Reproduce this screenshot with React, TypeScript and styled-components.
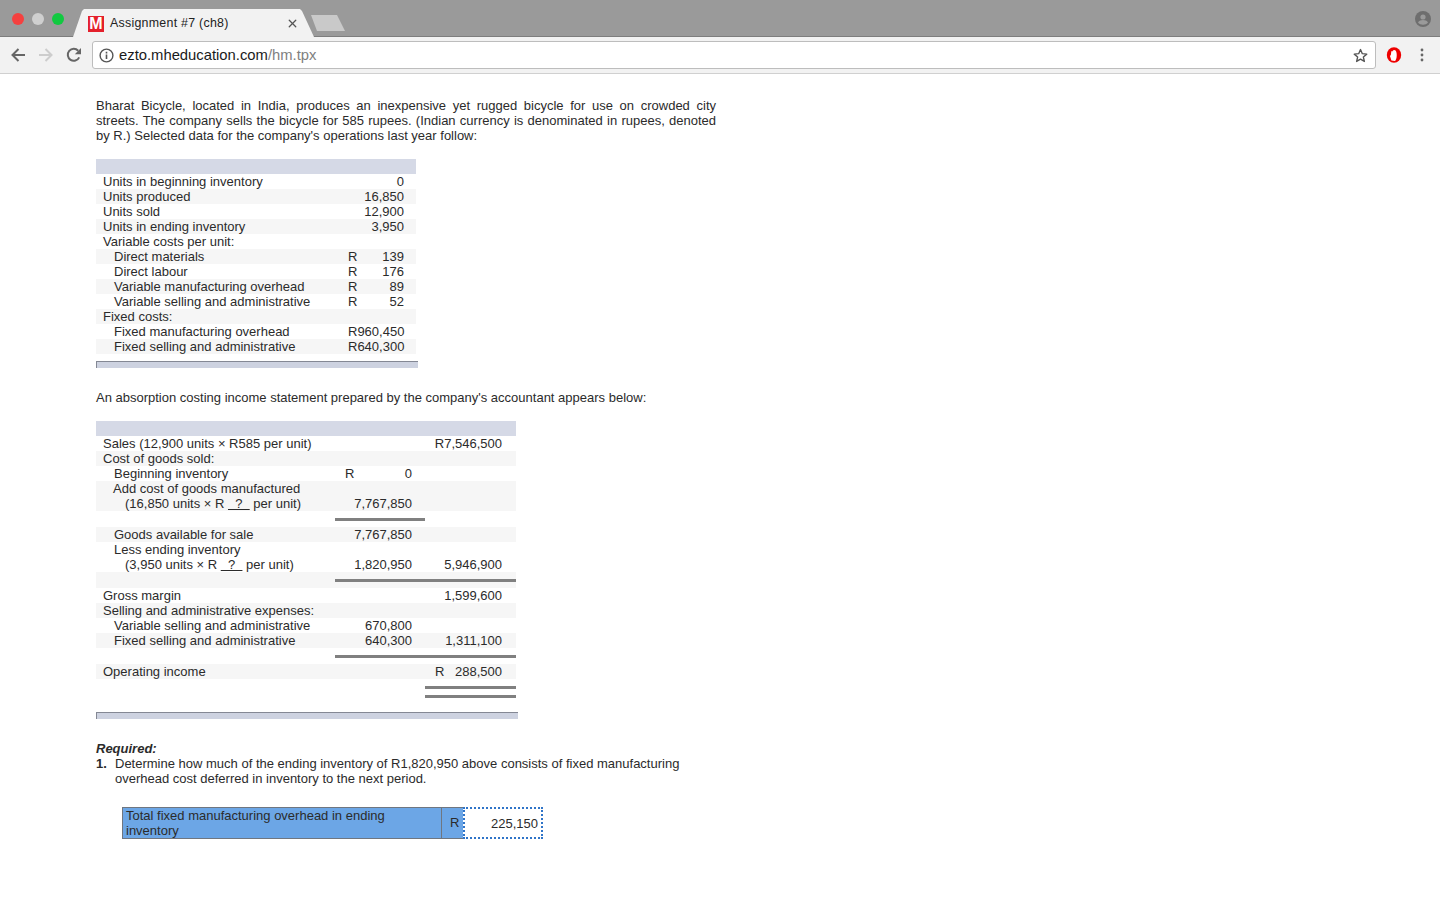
import React from "react";
import styled, { createGlobalStyle } from "styled-components";
import { X } from "lucide-react";

const Global = createGlobalStyle`
  html, body { margin: 0; padding: 0; background: #fff; }
  body { font-family: "Liberation Sans", Arial, sans-serif; color: #222; overflow: hidden; }
`;

const Page = styled.div`
  width: 1440px;
  height: 900px;
  display: flex;
  flex-direction: column;
`;

const TabBar = styled.div`
  height: 37px;
  box-sizing: border-box;
  background: #9a9a9a;
  border-bottom: 1px solid #7d7d7d;
  display: flex;
  align-items: flex-end;
  padding: 0 9px 0 12px;
`;

const Lights = styled.div`
  display: flex;
  gap: 8px;
  align-self: flex-start;
  margin-top: 13px;
  width: 61px;
`;

const Light = styled.span<{ $c: string }>`
  width: 12px;
  height: 12px;
  border-radius: 50%;
  background: ${(p) => p.$c};
`;

const Tab = styled.div`
  width: 241px;
  height: 28px;
  margin-bottom: -1px;
  background: #f2f2f2;
  clip-path: polygon(0 100%, 9px 2px, 11px 0, 227px 0, 229px 2px, 100% 100%);
  display: flex;
  align-items: center;
  padding: 0 15px;
  box-sizing: border-box;
`;

const TabLogo = styled.span`
  width: 16px;
  height: 16px;
  background: #e4202c;
  color: #fff;
  font-weight: 700;
  font-size: 16px;
  line-height: 16px;
  text-align: center;
  margin-right: 6px;
  margin-top: 1px;
  flex: none;
`;

const TabTitle = styled.span`
  flex: 1;
  font-size: 12.4px;
  letter-spacing: 0.26px;
  color: #222;
  white-space: nowrap;
`;

const NewTab = styled.div`
  width: 34px;
  height: 16px;
  background: #c9c9c9;
  margin: 0 0 5px -3px;
  clip-path: polygon(0 0, 26px 0, 100% 100%, 6px 100%);
`;

const Spacer = styled.div`
  flex: 1;
`;

const Profile = styled.svg`
  width: 16px;
  height: 16px;
  align-self: flex-start;
  margin-top: 11px;
`;

const Toolbar = styled.div`
  height: 37px;
  box-sizing: border-box;
  background: #f2f2f2;
  border-bottom: 1px solid #d0d0d0;
  display: flex;
  align-items: center;
  padding: 0 16px 0 10px;
`;

const NavIcons = styled.div`
  display: flex;
  gap: 12px;
  width: 82px;
  align-items: center;
`;

const NavIcon = styled.svg`
  width: 16px;
  height: 16px;
  flex: none;
`;

const Omnibox = styled.div`
  width: 1284px;
  height: 28px;
  box-sizing: border-box;
  background: #fff;
  border: 1px solid #bdbdbd;
  border-radius: 3px;
  display: flex;
  align-items: center;
  padding: 0 7px 0 6px;
  color: #555;
`;

const Url = styled.span`
  margin-left: 5px;
  flex: 1;
  font-size: 14.8px;
  color: #1a1a1a;
`;

const UrlPath = styled.span`
  color: #808080;
`;

const Extras = styled.div`
  flex: 1;
  display: flex;
  align-items: center;
  justify-content: space-between;
  padding: 0 0 0 10px;
`;

const Dots = styled.svg`
  width: 4px;
  height: 14px;
`;

const Content = styled.main`
  padding: 24px 0 0 96px;
  font-size: 13px;
  line-height: 15px;
  color: #2b2b2b;
`;

const Para = styled.p`
  width: 620px;
  margin: 0 0 16px;
  text-align: justify;
`;

const Plain = styled.p`
  margin: 22px 0 16px;
`;

const Sheet = styled.div<{ $w: number }>`
  width: ${(p) => p.$w}px;
`;

const SheetHead = styled.div`
  height: 15px;
  background: #d5d9e6;
`;

const SheetFoot = styled.div<{ $w: number; $top: number }>`
  width: ${(p) => p.$w}px;
  height: 7px;
  box-sizing: border-box;
  margin-top: ${(p) => p.$top}px;
  background: #cdd2e0;
  border-top: 1px solid #848894;
  border-left: 1px solid #848894;
`;

const Row1 = styled.div<{ $shade?: boolean }>`
  display: grid;
  grid-template-columns: 252px 1fr;
  height: 15px;
  background: ${(p) => (p.$shade ? "#f6f6f6" : "#fff")};
  white-space: nowrap;
`;

const Label = styled.span<{ $indent?: number }>`
  padding-left: ${(p) => 7 + (p.$indent ?? 0)}px;
`;

const Amount = styled.span<{ $pad?: number }>`
  text-align: right;
  padding-right: ${(p) => p.$pad ?? 12}px;
`;

const Row2 = styled.div<{ $shade?: boolean; $tall?: boolean }>`
  display: grid;
  grid-template-columns: 239px 90px 91px;
  height: ${(p) => (p.$tall ? 16 : 15)}px;
  background: ${(p) => (p.$shade ? "#f6f6f6" : "#fff")};
  white-space: nowrap;
`;

const Cell = styled.div<{ $l?: number; $r?: number }>`
  display: flex;
  justify-content: space-between;
  padding: 0 ${(p) => p.$r ?? 13}px 0 ${(p) => p.$l ?? 10}px;
`;

const Rule = styled.div<{ $start: number; $end: number; $top?: number }>`
  grid-column: ${(p) => p.$start} / ${(p) => p.$end};
  height: 3px;
  margin-top: ${(p) => p.$top ?? 7}px;
  background: #808080;
`;

const Blank = styled.span``;

const Under = styled.span`
  text-decoration: underline;
`;

const Required = styled.div`
  margin-top: 22px;
  font-weight: 700;
  font-style: italic;
`;

const Item = styled.div`
  display: flex;
  width: 600px;
`;

const ItemNo = styled.b`
  width: 19px;
  flex: none;
`;

const Answer = styled.div`
  margin: 21px 0 0 26px;
  width: 421px;
  height: 32px;
  display: grid;
  grid-template-columns: 320px 21px 80px;
`;

const AnswerLabel = styled.div`
  background: #6ca6e6;
  border: 1px solid #6f7680;
  padding: 0 3px;
  box-sizing: border-box;
`;

const AnswerCur = styled.div`
  background: #6ca6e6;
  border: solid #6f7680;
  border-width: 1px 0;
  padding: 7px 0 0 8px;
  box-sizing: border-box;
`;

const AnswerInput = styled.div`
  border: 2px dotted #2f74c8;
  box-sizing: border-box;
  text-align: right;
  padding: 7px 3px 0 0;
  background: #fff;
`;

const t1: [string, number, string, string, boolean][] = [
  ["Units in beginning inventory", 0, "", "0", false],
  ["Units produced", 0, "", "16,850", true],
  ["Units sold", 0, "", "12,900", false],
  ["Units in ending inventory", 0, "", "3,950", true],
  ["Variable costs per unit:", 0, "", "", false],
  ["Direct materials", 11, "R", "139", true],
  ["Direct labour", 11, "R", "176", false],
  ["Variable manufacturing overhead", 11, "R", "89", true],
  ["Variable selling and administrative", 11, "R", "52", false],
  ["Fixed costs:", 0, "", "", true],
  ["Fixed manufacturing overhead", 11, "", "R960,450", false],
  ["Fixed selling and administrative", 11, "", "R640,300", true],
];

export default function App() {
  return (
    <Page>
      <Global />
      <TabBar>
        <Lights>
          <Light $c="#f5403f" />
          <Light $c="#cfcfcf" />
          <Light $c="#11c940" />
        </Lights>
        <Tab>
          <TabLogo>M</TabLogo>
          <TabTitle>Assignment #7 (ch8)</TabTitle>
          <X size={13} strokeWidth={2.4} color="#555" />
        </Tab>
        <NewTab />
        <Spacer />
        <Profile viewBox="0 0 16 16">
          <circle cx="8" cy="8" r="8" fill="#6e6e6e" />
          <circle cx="8" cy="6" r="2.6" fill="#9a9a9a" />
          <path d="M3 11.5c1-2 3-2.6 5-2.6s4 .6 5 2.6c-1.2 1.5-3 2.2-5 2.2s-3.8-.7-5-2.2z" fill="#9a9a9a" />
        </Profile>
      </TabBar>
      <Toolbar>
        <NavIcons>
          <NavIcon viewBox="0 0 16 16">
            <path d="M15 8H2.5M8.5 2 2.5 8l6 6" fill="none" stroke="#666" strokeWidth="2" />
          </NavIcon>
          <NavIcon viewBox="0 0 16 16">
            <path d="M1 8h12.5M7.5 2l6 6-6 6" fill="none" stroke="#cdcdcd" strokeWidth="2" />
          </NavIcon>
          <NavIcon viewBox="0 0 16 16">
            <path d="M13.2 10.4A6 6 0 1 1 12.2 3.7" fill="none" stroke="#666" strokeWidth="2" />
            <path d="M15 1v6.2H8.8z" fill="#666" />
          </NavIcon>
        </NavIcons>
        <Omnibox>
          <svg width="15" height="15" viewBox="0 0 15 15">
            <circle cx="7.5" cy="7.5" r="6.4" fill="none" stroke="#555" strokeWidth="1.4" />
            <path d="M6.7 6.5h1.6v4.6H6.7zM6.7 3.8h1.6v1.6H6.7z" fill="#555" />
          </svg>
          <Url>
            ezto.mheducation.com<UrlPath>/hm.tpx</UrlPath>
          </Url>
          <svg width="15" height="15" viewBox="0 0 24 24">
            <path
              d="M12 2.5l2.9 6.6 7.1.7-5.4 4.7 1.6 7-6.2-3.7-6.2 3.7 1.6-7L2 9.8l7.1-.7z"
              fill="none"
              stroke="#555"
              strokeWidth="2.2"
              strokeLinejoin="round"
            />
          </svg>
        </Omnibox>
        <Extras>
          <svg width="16" height="16" viewBox="0 0 16 16">
            <ellipse cx="8" cy="8" rx="7.2" ry="7.8" fill="#ee0000" />
            <path
              d="M5.4 13.6 3.9 8.7l.9-.5.5-3.6c.2-.8 1-.7 1.2-.1.4-1.6 2.2-2 3.1-.9 1.1 1.4 1.4 4.3 1 6.6-.3 1.6-.9 3.2-1.6 3.9z"
              fill="#fff"
            />
          </svg>
          <Dots viewBox="0 0 4 14">
            <circle cx="2" cy="2" r="1.4" fill="#666" />
            <circle cx="2" cy="7" r="1.4" fill="#666" />
            <circle cx="2" cy="12" r="1.4" fill="#666" />
          </Dots>
        </Extras>
      </Toolbar>
      <Content>
        <Para>
          Bharat Bicycle, located in India, produces an inexpensive yet rugged bicycle for use on crowded city streets.
          The company sells the bicycle for 585 rupees. (Indian currency is denominated in rupees, denoted by R.) Selected
          data for the company's operations last year follow:
        </Para>
        <Sheet $w={320}>
          <SheetHead />
          {t1.map(([l, ind, c, a, s]) => (
            <Row1 key={l} $shade={s}>
              <Label $indent={ind}>{l}</Label>
              <Cell $l={0} $r={12}>
                <span>{c}</span>
                <span>{a}</span>
              </Cell>
            </Row1>
          ))}
        </Sheet>
        <SheetFoot $w={322} $top={7} />
        <Plain>An absorption costing income statement prepared by the company's accountant appears below:</Plain>
        <Sheet $w={420}>
          <SheetHead />
          <Row2>
            <Label>Sales (12,900 units × R585 per unit)</Label>
            <Blank />
            <Amount $pad={14}>R7,546,500</Amount>
          </Row2>
          <Row2 $shade>
            <Label>Cost of goods sold:</Label>
          </Row2>
          <Row2>
            <Label $indent={11}>Beginning inventory</Label>
            <Cell>
              <span>R</span>
              <span>0</span>
            </Cell>
          </Row2>
          <Row2 $shade>
            <Label $indent={10}>Add cost of goods manufactured</Label>
          </Row2>
          <Row2 $shade>
            <Label $indent={22}>
              (16,850 units × R <Under>&nbsp;&nbsp;?&nbsp;&nbsp;</Under> per unit)
            </Label>
            <Amount $pad={13}>7,767,850</Amount>
          </Row2>
          <Row2 $tall>
            <Rule $start={2} $end={3} />
          </Row2>
          <Row2 $shade>
            <Label $indent={11}>Goods available for sale</Label>
            <Amount $pad={13}>7,767,850</Amount>
          </Row2>
          <Row2>
            <Label $indent={11}>Less ending inventory</Label>
          </Row2>
          <Row2>
            <Label $indent={22}>
              (3,950 units × R <Under>&nbsp;&nbsp;?&nbsp;&nbsp;</Under> per unit)
            </Label>
            <Amount $pad={13}>1,820,950</Amount>
            <Amount $pad={14}>5,946,900</Amount>
          </Row2>
          <Row2 $shade $tall>
            <Rule $start={2} $end={4} />
          </Row2>
          <Row2>
            <Label>Gross margin</Label>
            <Blank />
            <Amount $pad={14}>1,599,600</Amount>
          </Row2>
          <Row2 $shade>
            <Label>Selling and administrative expenses:</Label>
          </Row2>
          <Row2>
            <Label $indent={11}>Variable selling and administrative</Label>
            <Amount $pad={13}>670,800</Amount>
          </Row2>
          <Row2 $shade>
            <Label $indent={11}>Fixed selling and administrative</Label>
            <Amount $pad={13}>640,300</Amount>
            <Amount $pad={14}>1,311,100</Amount>
          </Row2>
          <Row2 $tall>
            <Rule $start={2} $end={4} />
          </Row2>
          <Row2 $shade>
            <Label>Operating income</Label>
            <Blank />
            <Cell $r={14}>
              <span>R</span>
              <span>288,500</span>
            </Cell>
          </Row2>
          <Row2 $tall>
            <Rule $start={3} $end={4} />
          </Row2>
          <Row2>
            <Rule $start={3} $end={4} $top={0} />
          </Row2>
        </Sheet>
        <SheetFoot $w={422} $top={2} />
        <Required>Required:</Required>
        <Item>
          <ItemNo>1.</ItemNo>
          <span>
            Determine how much of the ending inventory of R1,820,950 above consists of fixed manufacturing overhead cost
            deferred in inventory to the next period.
          </span>
        </Item>
        <Answer>
          <AnswerLabel>Total fixed manufacturing overhead in ending inventory</AnswerLabel>
          <AnswerCur>R</AnswerCur>
          <AnswerInput>225,150</AnswerInput>
        </Answer>
      </Content>
    </Page>
  );
}
